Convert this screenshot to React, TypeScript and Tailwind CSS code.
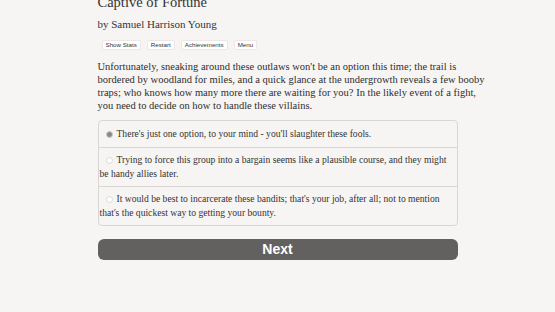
const paragraph = [
  "Unfortunately, sneaking around these outlaws won't be an option this time; the trail is",
  "bordered by woodland for miles, and a quick glance at the undergrowth reveals a few booby",
  "traps; who knows how many more there are waiting for you? In the likely event of a fight,",
  "you need to decide on how to handle these villains.",
]

const choices = [
  ["There's just one option, to your mind - you'll slaughter these fools."],
  ["Trying to force this group into a bargain seems like a plausible course, and they might", "be handy allies later."],
  ["It would be best to incarcerate these bandits; that's your job, after all; not to mention", "that's the quickest way to getting your bounty."],
]

export default function App() {
  return (
    <div className="min-h-screen w-full overflow-hidden bg-[#f7f5f3] text-[#333] font-['Liberation_Serif',serif]">
      <div className="mx-auto w-[360px] -mt-[7px]">
        <h1 className="text-[14.5px] leading-[18px] text-[#333]">Captive of Fortune</h1>
        <div className="mt-[6px] text-[11px] leading-[14px]">by Samuel Harrison Young</div>
        <div className="mt-[9px] ml-[4px] flex gap-[6px] font-['Liberation_Sans',sans-serif] text-[6.2px] leading-[8px] text-[#333]">
          <span className="bg-white border border-[#ebe8e5] rounded-[2px] px-[3px]">Show Stats</span>
          <span className="bg-white border border-[#ebe8e5] rounded-[2px] px-[3px]">Restart</span>
          <span className="bg-white border border-[#ebe8e5] rounded-[2px] px-[3px]">Achievements</span>
          <span className="bg-white border border-[#ebe8e5] rounded-[2px] px-[3px]">Menu</span>
        </div>
        <p className="mt-[10px] text-[10.5px] leading-[13px] whitespace-nowrap text-[#2e2e2e]">
          {paragraph.map((l, i) => (
            <span key={i} className="block">{l}</span>
          ))}
        </p>
        <div className="mt-[8px] border border-[#d9d6d3] rounded-[4px] text-[9.6px] leading-[14px]">
          {choices.map((lines, i) => (
            <div key={i} className={`pl-[1px] whitespace-nowrap ${i === 0 ? "py-[6px]" : "py-[5px] border-t border-[#d9d6d3]"}`}>
              {lines.map((l, j) => (
                <span key={j} className="block">
                  {j === 0 && (
                    <span
                      className={`inline-block align-[-1px] w-[7px] h-[7px] rounded-full mr-[4px] ml-[6px] ${
                        i === 0 ? "bg-[#8a8886] border-[1.5px] border-[#cfcdcb]" : "border border-[#dcdad8] bg-white"
                      }`}
                    />
                  )}
                  {l}
                </span>
              ))}
            </div>
          ))}
        </div>
        <button className="mt-[13px] w-full h-[21px] rounded-[6px] bg-[#636160] text-white font-['Liberation_Sans',sans-serif] font-bold text-[14px] leading-[21px]">
          Next
        </button>
      </div>
    </div>
  )
}
